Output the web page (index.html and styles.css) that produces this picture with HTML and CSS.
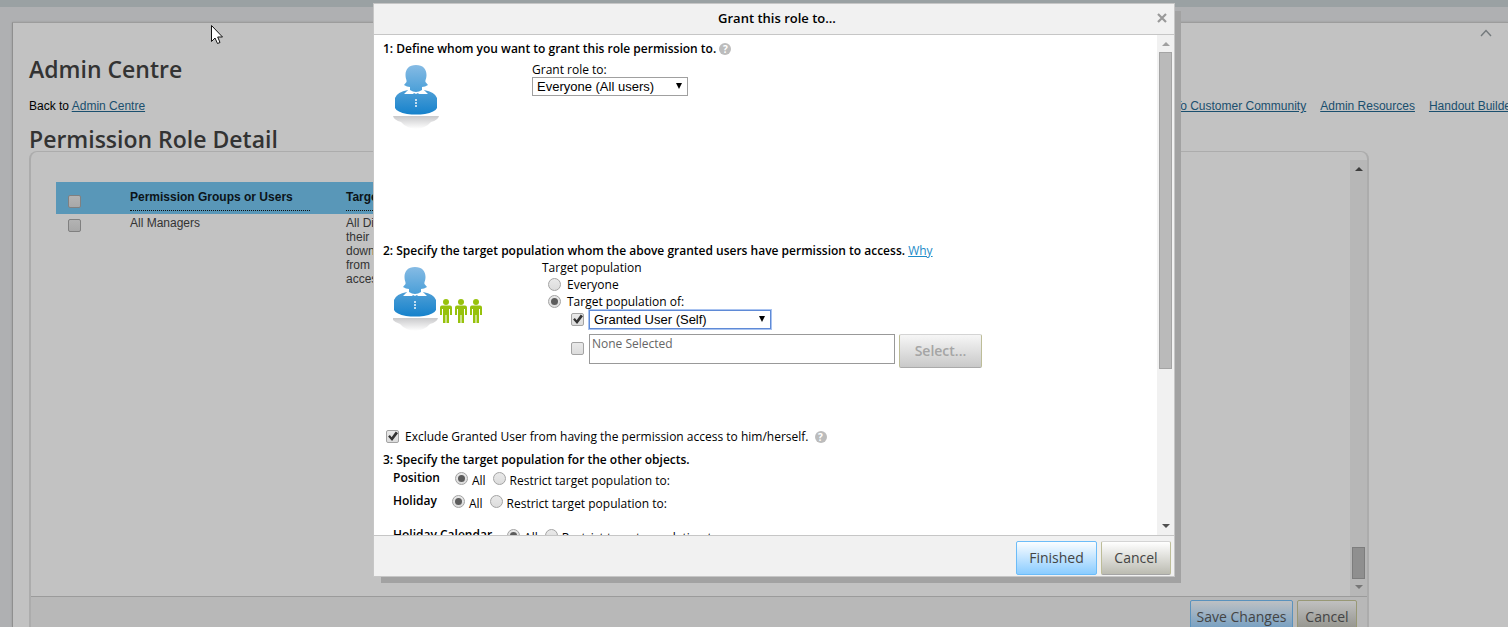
FILE: index.html
```html
<!DOCTYPE html>
<html lang="en">

<head>
    <meta charset="UTF-8">
    <meta name="viewport" content="width=device-width, initial-scale=1.0">
    <title>Admin Centre</title>
    <link rel="stylesheet" href="styles.css">
</head>

<body>
    <div class="topbar"></div>
    <div class="page">
        <button class="collapse" type="button" aria-label="Collapse header">
            <svg width="12" height="8" viewBox="0 0 12 8"><path d="M1 7 L6 1.5 L11 7" fill="none" stroke="#73797c" stroke-width="1.4"/></svg>
        </button>
        <h1>Admin Centre</h1>
        <div class="links">
            <span>Back to <a href="#">Admin Centre</a></span>
            <nav>
                <a href="#">To Customer Community</a>
                <a href="#">Admin Resources</a>
                <a href="#">Handout Builder</a>
            </nav>
        </div>
        <h1 class="detail-title">Permission Role Detail</h1>

        <div class="frame">
            <div class="frame-body">
                <table class="groups">
                    <thead>
                        <tr>
                            <th class="col-check"><input type="checkbox" class="dim" aria-label="Select all"></th>
                            <th class="col-group"><div>Permission Groups or Users</div></th>
                            <th><div>Target Population</div></th>
                        </tr>
                    </thead>
                    <tbody>
                        <tr>
                            <td><input type="checkbox" class="dim" aria-label="Select All Managers"></td>
                            <td>All Managers</td>
                            <td>All Direct<br>their<br>down<br>from<br>access</td>
                        </tr>
                    </tbody>
                </table>
                <div class="scrollbar scrollbar-dim">
                    <span class="arrow up"></span>
                    <span class="track"></span>
                    <span class="thumb"></span>
                    <span class="arrow down"></span>
                </div>
            </div>
            <div class="frame-footer">
                <button class="btn btn-save" type="button">Save Changes</button>
                <button class="btn btn-cancel-dim" type="button">Cancel</button>
            </div>
        </div>
    </div>

    <div class="dialog" role="dialog" aria-labelledby="dialog-title">
        <div class="dialog-header">
            <h2 id="dialog-title">Grant this role to...</h2>
            <button class="close" type="button" aria-label="Close">
                <svg width="10" height="10" viewBox="0 0 10 10"><path d="M1 1 L9 9 M9 1 L1 9" stroke="#999" stroke-width="2.2"/></svg>
            </button>
        </div>

        <div class="dialog-main">
            <div class="dialog-content">
                <section class="step step-grant">
                    <h3>1: Define whom you want to grant this role permission to. <span class="help">?</span></h3>
                    <div class="step-row">
                        <div class="picture">
                            <svg width="46" height="66" viewBox="0 0 46 66">
                                <defs>
                                    <linearGradient id="head" x1="0" y1="0" x2="0" y2="1">
                                        <stop offset="0" stop-color="#86bbe4"/>
                                        <stop offset="1" stop-color="#4a9fd8"/>
                                    </linearGradient>
                                    <linearGradient id="torso" x1="0" y1="0" x2="0" y2="1">
                                        <stop offset="0" stop-color="#4f9fd6"/>
                                        <stop offset="1" stop-color="#1682cc"/>
                                    </linearGradient>
                                    <linearGradient id="shade" x1="0" y1="0" x2="0" y2="1">
                                        <stop offset="0" stop-color="#c9c9cb"/>
                                        <stop offset="1" stop-color="#fff"/>
                                    </linearGradient>
                                </defs>
                                <g id="person">
                                    <path d="M0 52 H46 Q45 56 38 58 Q33 64 23 65 Q13 64 8 58 Q1 56 0 52 Z" fill="url(#shade)"/>
                                    <path d="M2 34 Q4 28 15 26 L23 30 L31 26 Q42 28 44 34 V44 Q42 48 32 50 Q23 51 14 50 Q4 48 2 44 Z" fill="url(#torso)"/>
                                    <path d="M16 25 L11 30 L20 30 L23 27 L26 30 L35 30 L30 25 Z" fill="#fff"/>
                                    <path d="M23 1 C30 1 33.500 5 33.500 11 C33.500 15 32 16 32.500 18 L35 21 Q32 23 29 23 V26 Q23 30 17 26 V23 Q14 23 11 21 L13.500 18 C14 16 12.500 15 12.500 11 C12.500 5 16 1 23 1 Z" fill="url(#head)"/>
                                    <path d="M23 35 V43" stroke="#fff" stroke-width="1.4" stroke-dasharray="2 1"/>
                                </g>
                            </svg>
                        </div>
                        <div class="grant-field">
                            <label for="grant-to">Grant role to:</label>
                            <span class="select select-grant"><select id="grant-to"><option>Everyone (All users)</option></select></span>
                        </div>
                    </div>
                </section>

                <section class="step step-target">
                    <h3>2: Specify the target population whom the above granted users have permission to access. <a href="#">Why</a></h3>
                    <div class="step-row">
                        <div class="picture">
                            <svg width="92" height="66" viewBox="1 0 92 66">
                                <use href="#person"/>
                                <g fill="#97c20c">
                                    <g id="member">
                                        <circle cx="54" cy="36" r="3"/>
                                        <path d="M50 39.500 H58 Q60 39.500 60 41.500 V49 H58 V43 H57 V57 H54.500 V49 H53.500 V57 H51 V43 H50 V49 H48 V41.500 Q48 39.500 50 39.500 Z"/>
                                    </g>
                                    <use href="#member" x="15"/>
                                    <use href="#member" x="30"/>
                                </g>
                            </svg>
                        </div>
                        <div class="target-field">
                            <div>Target population</div>
                            <div class="option">
                                <input type="radio" name="target" id="target-all">
                                <label for="target-all">Everyone</label>
                            </div>
                            <div class="option">
                                <input type="radio" name="target" id="target-of" checked>
                                <label for="target-of">Target population of:</label>
                            </div>
                            <div class="suboption">
                                <input type="checkbox" aria-label="Use granted user" checked>
                                <span class="select select-user"><select aria-label="Granted user"><option>Granted User (Self)</option></select></span>
                            </div>
                            <div class="suboption suboption-groups">
                                <input type="checkbox" aria-label="Use selected groups">
                                <textarea class="selected" aria-label="Selected groups" readonly>None Selected</textarea>
                                <button class="btn btn-select" type="button" disabled>Select...</button>
                            </div>
                        </div>
                    </div>
                </section>

                <div class="exclude">
                    <input type="checkbox" id="exclude" checked>
                    <label for="exclude">Exclude Granted User from having the permission access to him/herself.</label>
                    <span class="help">?</span>
                </div>

                <section>
                    <h3>3: Specify the target population for the other objects.</h3>
                    <div class="object">
                        <strong>Position</strong>
                        <input type="radio" name="position" id="position-all" checked>
                        <label for="position-all">All</label>
                        <input type="radio" name="position" id="position-some">
                        <label for="position-some">Restrict target population to:</label>
                    </div>
                    <div class="object">
                        <strong>Holiday</strong>
                        <input type="radio" name="holiday" id="holiday-all" checked>
                        <label for="holiday-all">All</label>
                        <input type="radio" name="holiday" id="holiday-some">
                        <label for="holiday-some">Restrict target population to:</label>
                    </div>
                    <div class="object object-last">
                        <strong>Holiday Calendar</strong>
                        <input type="radio" name="calendar" id="calendar-all" checked>
                        <label for="calendar-all">All</label>
                        <input type="radio" name="calendar" id="calendar-some">
                        <label for="calendar-some">Restrict target population to:</label>
                    </div>
                </section>
            </div>
            <div class="scrollbar">
                <span class="arrow up"></span>
                <span class="thumb thumb-long"></span>
                <span class="track"></span>
                <span class="arrow down"></span>
            </div>
        </div>

        <div class="dialog-footer">
            <button class="btn btn-primary" type="button">Finished</button>
            <button class="btn btn-cancel" type="button">Cancel</button>
        </div>
    </div>

    <svg class="pointer" width="13" height="20" viewBox="0 0 13 20"><path d="M.5 .5 V16.500 L4 13 L6.500 18.500 L9 17.500 L6.700 12 H11.500 Z" fill="#fff" stroke="#111" stroke-width="1"/></svg>
</body>

</html>
```

FILE: styles.css
```css
* {
    box-sizing: border-box;
}

body {
    background-color: #afb0b2;
    display: flex;
    flex-direction: column;
    font-family: "Liberation Sans", Arial, sans-serif;
    font-size: 12px;
    height: 100vh;
    line-height: 14px;
    margin: 0;
    overflow: hidden;
}

h1, h2, h3 {
    margin: 0;
}

button {
    font-family: inherit;
    padding: 0;
}

/* page behind the dialog */
.topbar {
    background-color: #9aa1a3;
    flex: none;
    height: 7px;
}

.page {
    background-color: #c2c2c2;
    border-left: 1px solid #8f8f8f;
    border-top: 1px solid #9c9c9c;
    box-shadow: 0 0 2px #999;
    display: flex;
    flex: 1;
    flex-direction: column;
    margin: 15px 0 0 12px;
    min-height: 0;
    padding-left: 16px;
}

.collapse {
    align-self: flex-end;
    background: none;
    border: 0;
    height: 8px;
    margin: 6px 16px 0 0;
}

.collapse svg {
    display: block;
}

h1 {
    color: #333;
    font-family: "Open Sans", sans-serif;
    font-size: 23px;
    font-weight: 600;
    line-height: 32px;
    margin-top: 16px;
}

.links {
    display: flex;
    justify-content: space-between;
    margin-top: 14px;
    white-space: nowrap;
}

.links nav {
    display: flex;
    gap: 14px;
    margin-right: -7px;
}

.links a {
    color: #1a4f6e;
}

h1.detail-title {
    margin-top: 10px;
}

.frame {
    border: 2px solid #acacac;
    border-bottom: 0;
    border-top-width: 1px;
    border-radius: 8px 8px 0 0;
    display: flex;
    flex: 1;
    flex-direction: column;
    margin: -4px 139px 0 0;
    min-height: 0;
}

.frame-body {
    border-bottom: 1px solid #9b9b9b;
    display: flex;
    flex: 1;
    justify-content: space-between;
    min-height: 0;
    padding-top: 8px;
}

.frame-footer {
    background-color: #b8b8b8;
    display: flex;
    flex: none;
    gap: 4px;
    height: 30px;
    justify-content: flex-end;
    overflow: hidden;
    padding: 3px 10px 0;
}

.groups {
    align-self: flex-start;
    border-collapse: collapse;
    color: #333;
    margin: 22px 0 0 25px;
    table-layout: fixed;
    width: 80%;
}

.groups th {
    background-color: #5997b8;
    color: #0c1418;
    height: 32px;
    padding: 8px 36px 0 0;
    text-align: left;
    vertical-align: top;
}

.groups th div {
    border-bottom: 1px dotted #111;
    height: 21px;
}

.groups td {
    padding: 2px 0 0;
    vertical-align: top;
}

.groups .col-check {
    padding: 13px 0 0;
    width: 74px;
}

.groups .col-group {
    width: 216px;
}

/* form controls */
input[type="checkbox"], input[type="radio"] {
    appearance: none;
    background: linear-gradient(#e9e9e9, #dcdcdc);
    border: 1px solid #a3a3a3;
    border-radius: 2px;
    display: block;
    flex: none;
    height: 13px;
    margin: 0;
    width: 13px;
}

input[type="radio"] {
    border-radius: 50%;
}

input.dim[type="checkbox"] {
    background: linear-gradient(#b3b3b3, #a8a8a8);
    border-color: #808080;
    margin-left: 12px;
}

td input.dim[type="checkbox"] {
    margin-top: 3px;
}

input[type="radio"]:checked::before {
    background-color: #5c5c5c;
    border-radius: 50%;
    content: "";
    display: block;
    height: 7px;
    margin: 2px;
    width: 7px;
}

input[type="checkbox"]:checked::before {
    background-color: #333;
    clip-path: polygon(10% 50%, 26% 36%, 42% 56%, 80% 4%, 100% 20%, 46% 92%);
    content: "";
    display: block;
    height: 11px;
    width: 11px;
}

.select {
    display: flex;
    position: relative;
}

.select::after {
    border: 3px solid transparent;
    border-bottom: 0;
    border-top: 6px solid #000;
    content: "";
    position: absolute;
    right: 6px;
    top: 6px;
}

.select select {
    appearance: none;
    background-color: #fff;
    border: 1px solid #a0a0a0;
    color: #000;
    font-family: "Liberation Sans", Arial, sans-serif;
    font-size: 13px;
    height: 19px;
    padding: 0 4px;
    width: 100%;
}

.select-grant {
    width: 156px;
}

.select-user {
    width: 182px;
}

.select-user select {
    border-color: #5f8ad6;
    box-shadow: 0 0 0 1px #a9c3f0;
}

.btn {
    border: 1px solid #bdbd98;
    border-radius: 2px;
    border-top-color: #d4d4d4;
    color: #444;
    flex: none;
    font-family: "Open Sans", sans-serif;
    font-size: 14px;
    height: 34px;
    padding-bottom: 2px;
}

.btn-primary {
    background: linear-gradient(#fafdff, #8accff);
    border-color: #6cbcf8;
    width: 81px;
}

.btn-cancel {
    background: linear-gradient(#fff, #bbbbb1);
    border-bottom-color: #a5a5a5;
    width: 70px;
}

.btn-select {
    background: linear-gradient(#f6f6f6, #c9c9c9);
    border-bottom-color: #aaa;
    color: #a5a5a5;
    font-weight: 600;
    width: 83px;
}

.btn-save {
    background: linear-gradient(#bdc0c3, #6a9ac2);
    border-color: #5a92bd;
    width: 103px;
}

.btn-cancel-dim {
    background: linear-gradient(#c0c0c0, #8e8e86);
    border-color: #989875;
    width: 60px;
}

/* scrollbars */
.scrollbar {
    align-items: center;
    background-color: #f1f1f1;
    color: #505050;
    display: flex;
    flex: none;
    flex-direction: column;
    padding: 7px 0;
    width: 17px;
}

.arrow {
    border: 4px solid transparent;
    flex: none;
}

.up {
    border-bottom-color: currentColor;
    border-top: 0;
    margin-bottom: 6px;
}

.down {
    border-bottom: 0;
    border-top-color: currentColor;
    margin-top: 6px;
}

.track {
    flex: 1;
}

.thumb {
    background-color: #bababa;
    border: 1px solid #a4a4a4;
    width: 13px;
}

.thumb-long {
    height: 317px;
}

.dialog .up {
    border-bottom-color: #a0a0a0;
}

.scrollbar-dim {
    background-color: #b7b7b7;
    color: #3d3d3d;
}

.scrollbar-dim .thumb {
    background-color: #8f8f8f;
    border-color: #7d7d7d;
    height: 32px;
}

.scrollbar-dim .down {
    border-top-color: #777;
}

/* dialog */
.dialog {
    background-color: #fff;
    border: 1px solid #c6c6c6;
    box-shadow: 7px 7px 0 -1px #a2a2a2;
    display: flex;
    flex-direction: column;
    font-family: "Open Sans", sans-serif;
    height: 574px;
    left: 373px;
    position: absolute;
    top: 3px;
    width: 802px;
}

.dialog-header {
    align-items: center;
    background-color: #f1f1f1;
    border-bottom: 1px solid #c6c6c6;
    display: flex;
    flex: none;
    height: 31px;
    padding: 0 7px 2px 23px;
}

.dialog-header h2 {
    flex: 1;
    font-size: 13px;
    font-weight: 600;
    text-align: center;
}

.close {
    background: none;
    border: 0;
}

.close svg {
    display: block;
}

.dialog-main {
    display: flex;
    flex: 1;
    min-height: 0;
}

.dialog-content {
    flex: 1;
    line-height: 16px;
    overflow: hidden;
    padding: 6px 0 0 9px;
}

h3 {
    font-size: 12px;
    font-weight: 600;
    line-height: 16px;
}

h3 a {
    color: #1e8bc8;
    font-weight: 400;
}

.help {
    background-color: #bcbcbc;
    border-radius: 50%;
    color: #fff;
    display: inline-block;
    font-size: 10px;
    font-weight: 700;
    height: 12px;
    line-height: 12px;
    text-align: center;
    width: 12px;
}

.step-row {
    display: flex;
}

.picture {
    padding: 7px 0 0 10px;
    width: 149px;
}

.step-grant {
    min-height: 202px;
}

.step-target {
    min-height: 184px;
}

.grant-field {
    padding-top: 6px;
}

.grant-field label {
    display: block;
    line-height: 14px;
}

.target-field {
    padding: 1px 0 0 10px;
}

.option {
    align-items: center;
    display: flex;
    gap: 6px;
    line-height: 17px;
    padding-left: 6px;
}

.suboption {
    align-items: flex-start;
    display: flex;
    padding-left: 29px;
}

.suboption input[type="checkbox"] {
    margin: 3px 5px 0 0;
}

.suboption-groups {
    margin-top: 5px;
}

.suboption-groups input[type="checkbox"] {
    margin-top: 8px;
}

.selected {
    border: 1px solid #999;
    color: #666;
    font-family: "Open Sans", sans-serif;
    font-size: 12px;
    height: 30px;
    line-height: 16px;
    margin-right: 4px;
    padding: 1px 2px;
    resize: none;
    width: 306px;
}

.exclude {
    align-items: center;
    display: flex;
    gap: 6px;
    height: 19px;
    margin-bottom: 6px;
    padding-left: 3px;
}

.object {
    align-items: flex-start;
    display: flex;
    height: 23px;
    padding: 2px 0 0 10px;
}

.object strong {
    font-weight: 600;
    margin-right: 15px;
}

.object input[type="radio"] {
    margin-top: 2px;
}

.object label {
    margin: 3px 7px 0 4px;
}

.object-last {
    margin-top: 11px;
}

.dialog-footer {
    background-color: #f1f1f1;
    border-top: 1px solid #c6c6c6;
    display: flex;
    flex: none;
    gap: 4px;
    justify-content: flex-end;
    padding: 5px 3px 1px;
}

/* mouse pointer */
.pointer {
    left: 211px;
    position: absolute;
    top: 25px;
}
```
